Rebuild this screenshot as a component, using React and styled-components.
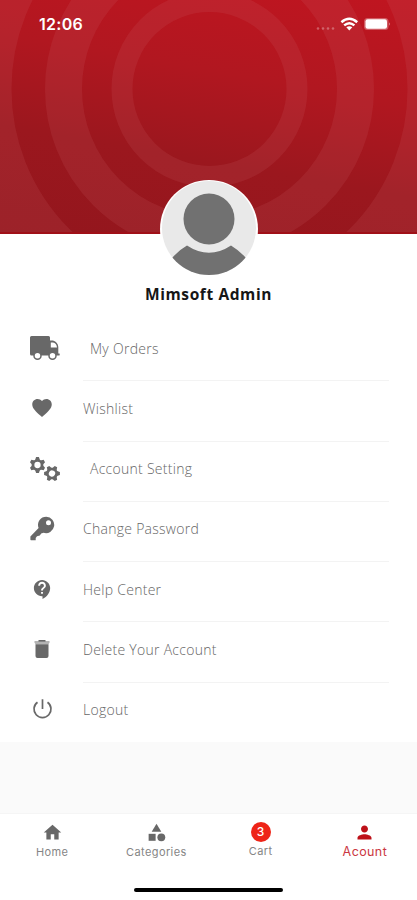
import React, {useState} from 'react';
import styled, {createGlobalStyle} from "styled-components";
import {IoMdHeart} from "react-icons/io";
import {MdContactSupport, MdHome, MdCategory, MdPerson} from "react-icons/md";

const Truck = () => (
    <svg viewBox="0 0 30 30" fill="currentColor">
        <path d="M1.500 3H18.500Q20 3 20 4.500V7.500H23Q28 9 28.300 14V20.500H29.500Q30 21 29.500 22.500H1.500Q0 22.500 0 21V4.500Q0 3 1.500 3ZM20.800 9.500V14.500H27Q26.500 10 23 9.500Z" fillRule="evenodd"/>
        <circle cx="7.500" cy="22.800" r="3.500" fill="#fff" stroke="currentColor" strokeWidth="1.500"/>
        <circle cx="22.500" cy="22.800" r="3.500" fill="#fff" stroke="currentColor" strokeWidth="1.500"/>
    </svg>
)

const Gear = ({transform}) => (
    <g transform={transform}>
        <circle r="4.500" fill="none" stroke="currentColor" strokeWidth="2.700"/>
        {[0, 60, 120, 180, 240, 300].map(angle => (
            <path key={angle} d="M-2.400 -5L-1.400 -7.900H1.400L2.400 -5Z" fill="currentColor" transform={`rotate(${angle})`}/>
        ))}
    </g>
)

const Gears = () => (
    <svg viewBox="0 0 30 30">
        <Gear transform="translate(7.500 11)"/>
        <Gear transform="translate(22 19.500) rotate(30)"/>
    </svg>
)

const Key = () => (
    <svg viewBox="0 0 25 25" fill="currentColor">
        <path d="M16.300 .7A8.200 8.200 0 1 1 13.500 16.700L11.200 17.400L9.800 19.600L7 20.300L5.700 22V24.300H1Q.4 24.300 .4 23.600V20.500L8.600 12A8.200 8.200 0 0 1 16.300 .7ZM18.500 4.300A2.500 2.500 0 1 0 18.500 9.300A2.500 2.500 0 1 0 18.500 4.300Z" fillRule="evenodd"/>
    </svg>
)

const Trash = () => (
    <svg viewBox="0 0 20 20" fill="currentColor">
        <path d="M3.500 5.300H16.500V17Q16.500 19 14.500 19H5.500Q3.500 19 3.500 17Z"/>
        <path d="M2.500 2H17.500V3.500L16.500 5.300H3.500L2.500 3.500Z" fillOpacity=".5"/>
        <path d="M6.500 1H13.500V2.600H6.500Z"/>
    </svg>
)

const Power = () => (
    <svg viewBox="0 0 21 21" fill="none" stroke="currentColor" strokeWidth="1.700">
        <path d="M10.500 .3V10M5.500 3.200A8.500 8.500 0 1 0 15.500 3.200"/>
    </svg>
)

const menu = [
    {title: 'My Orders', icon: <Truck/>, size: 30, indent: 7},
    {title: 'Wishlist', icon: <IoMdHeart/>, size: 24},
    {title: 'Account Setting', icon: <Gears/>, size: 30, indent: 7},
    {title: 'Change Password', icon: <Key/>, size: 25},
    {title: 'Help Center', icon: <MdContactSupport/>, size: 23},
    {title: 'Delete Your Account', icon: <Trash/>, size: 20},
    {title: 'Logout', icon: <Power/>, size: 21},
]

const App = () => {
    const [activeTab, setActiveTab] = useState('account')
    return (
        <Screen>
            <GlobalStyle/>
            <Header>
                <Rings viewBox="0 0 417 234">
                    <circle cx="209.5" cy="89" r="87.5" strokeWidth="21"/>
                    <circle cx="209.5" cy="89" r="146" strokeWidth="37"/>
                    <circle cx="209.5" cy="89" r="258" strokeWidth="120"/>
                </Rings>
                <StatusBar>
                    <Time>12:06</Time>
                    <StatusIcons/>
                </StatusBar>
            </Header>
            <Profile>
                <Avatar viewBox="0 0 98 98">
                    <clipPath id="face"><circle cx="49" cy="48" r="47"/></clipPath>
                    <circle cx="49" cy="49" r="49" fill="#fff"/>
                    <circle cx="49" cy="48" r="47" fill="#e9e9e9"/>
                    <g clipPath="url(#face)" fill="#717171">
                        <circle cx="49" cy="39" r="25.5"/>
                        <path d="M27 65.500Q49 80 71 65.500Q80 71 86 78L80 98H18L12 78Q19 70 27 65.500Z"/>
                    </g>
                </Avatar>
                <Name>Mimsoft Admin</Name>
            </Profile>
            <Menu>
                {menu.map(item => (
                    <Item key={item.title}>
                        <ItemIcon $size={item.size} $indent={item.indent}>{item.icon}</ItemIcon>
                        <ItemText $indent={item.indent}>{item.title}</ItemText>
                    </Item>
                ))}
            </Menu>
            <TabBar>
                <Tab onClick={() => setActiveTab('home')} $active={activeTab === 'home'}>
                    <MdHome/>
                    <span>Home</span>
                </Tab>
                <Tab onClick={() => setActiveTab('categories')} $active={activeTab === 'categories'}>
                    <MdCategory/>
                    <span>Categories</span>
                </Tab>
                <Tab onClick={() => setActiveTab('cart')} $active={activeTab === 'cart'}>
                    <Count>3</Count>
                    <span>Cart</span>
                </Tab>
                <Tab onClick={() => setActiveTab('account')} $active={activeTab === 'account'}>
                    <MdPerson/>
                    <span>Acount</span>
                </Tab>
            </TabBar>
            <HomeBar><div/></HomeBar>
        </Screen>
    );
};

const StatusIcons = () => (
    <svg width="76" height="16" viewBox="0 0 76 16">
        <g fill="#fff" fillOpacity=".3">
            <circle cx="3" cy="12.500" r="1.300"/>
            <circle cx="8" cy="12.500" r="1.300"/>
            <circle cx="13" cy="12.500" r="1.300"/>
            <circle cx="18" cy="12.500" r="1.300"/>
        </g>
        <g fill="none" stroke="#fff" strokeWidth="2.500">
            <path d="M26.400 6.200Q34.300 -.6 42.200 6.200"/>
            <path d="M29.200 9.400Q34.300 5 39.400 9.400"/>
        </g>
        <path d="M31.300 11.300Q34.300 9.200 37.300 11.300L34.300 14.400Z" fill="#fff"/>
        <rect x="49" y="2" width="24.500" height="12" rx="3.500" fill="#fff" fillOpacity=".3"/>
        <rect x="50.500" y="3.300" width="21.500" height="9.500" rx="2.200" fill="#fff"/>
        <path d="M74.300 6.300Q76 8 74.300 9.800Z" fill="#fff" fillOpacity=".6"/>
    </svg>
)

const GlobalStyle = createGlobalStyle`
  * {
    box-sizing: border-box;
  }

  body {
    margin: 0;
    background: #fff;
  }
`

const Screen = styled.div`
  display: flex;
  flex-direction: column;
  width: 417px;
  height: 900px;
  overflow: hidden;
  background: #fafafa;
  font-family: "Open Sans", sans-serif;
`

const Header = styled.header`
  display: grid;
  flex: none;
  height: 234px;
  overflow: hidden;
  border-bottom: 2px solid #a01018;
  background: linear-gradient(190deg, #c01520 0%, #b11720 35%, #9b171e 65%, #93161d 100%);

  > * {
    grid-area: 1 / 1;
  }
`

const Rings = styled.svg`
  width: 417px;
  height: 234px;

  circle {
    fill: none;
    stroke: #d06a74;
    stroke-opacity: .15;
  }
`

const StatusBar = styled.div`
  display: flex;
  justify-content: space-between;
  align-items: center;
  height: 32px;
  margin-top: 8px;
  padding: 0 26px 0 39px;
`

const Time = styled.span`
  color: #fff;
  font-family: Inter, sans-serif;
  font-size: 16px;
  font-weight: 600;
  letter-spacing: .3px;
`

const Profile = styled.section`
  display: flex;
  flex: none;
  flex-direction: column;
  align-items: center;
  height: 84px;
  background: #fff;
`

const Avatar = styled.svg`
  z-index: 1;
  flex: none;
  width: 98px;
  height: 98px;
  margin-top: -54px;
`

const Name = styled.h1`
  margin: 4px 0 0;
  color: #161616;
  font-size: 15.5px;
  font-weight: 700;
  line-height: 24px;
  letter-spacing: .6px;
`

const Menu = styled.ul`
  flex: none;
  height: 424px;
  margin: 0;
  padding: 3px 28px 0;
  list-style: none;
  background: #fff;
`

const ItemText = styled.span`
  display: flex;
  flex: 1;
  align-items: center;
  height: 100%;
  padding-left: ${props => props.$indent || 0}px;
  padding-bottom: 5px;
  border-bottom: 1px solid #f3f3f3;
  color: #666;
  font-size: 14px;
  font-weight: 300;
  letter-spacing: .27px;
`

const Item = styled.li`
  display: flex;
  align-items: center;
  height: 60.25px;

  &:last-child ${ItemText} {
    border-color: transparent;
  }
`

const ItemIcon = styled.span`
  display: flex;
  justify-content: center;
  width: 28px;
  margin-right: 27px;
  padding-bottom: 6px;
  padding-left: ${props => props.$indent ? 5 : 0}px;
  color: #686868;

  svg {
    flex: none;
    width: ${props => props.$size}px;
    height: ${props => props.$size}px;
  }
`

const TabBar = styled.nav`
  display: flex;
  flex: none;
  height: 58px;
  margin-top: 71px;
  border-top: 1px solid #f5f5f5;
  background: #fff;
`

const Tab = styled.button`
  display: flex;
  flex: 1;
  flex-direction: column;
  align-items: center;
  padding: 8px 0 0;
  border: none;
  background: none;
  color: ${props => props.$active ? '#bd1119' : '#686868'};
  font-family: Inter, sans-serif;
  font-size: ${props => props.$active ? 12.5 : 11}px;
  line-height: 18px;
  letter-spacing: .4px;

  svg {
    width: 21px;
    height: 21px;
  }

  span {
    color: ${props => props.$active ? '#cb3842' : '#858585'};
  }
`

const Count = styled.b`
  width: 20px;
  height: 20px;
  border-radius: 50%;
  background: #ee2417;
  color: #fff;
  font-size: 12px;
  font-weight: 500;
  line-height: 20px;
  letter-spacing: 0;
`

const HomeBar = styled.div`
  display: flex;
  flex: 1;
  justify-content: center;
  padding-top: 17px;
  background: #fff;

  div {
    width: 149px;
    height: 4px;
    border-radius: 2px;
    background: #000;
  }
`

export default App;
